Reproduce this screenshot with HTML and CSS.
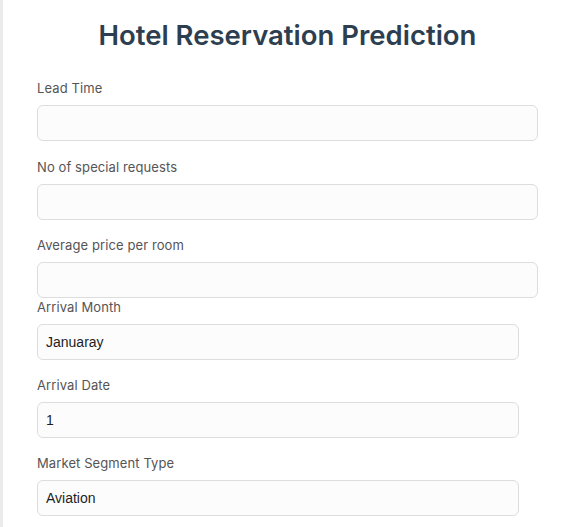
FILE: index.html
```html
<!DOCTYPE html>
<html lang="en">
<head>
<meta charset="utf-8">
<title>Hotel Reservation Prediction</title>
<link rel="stylesheet" href="styles.css">
</head>
<body>
<div class="page">
  <form class="form">
    <h1 class="title">Hotel Reservation Prediction</h1>

    <div class="group">
      <label class="label" for="lead">Lead Time</label>
      <input class="field" id="lead" type="text">
    </div>

    <div class="group group-tight">
      <label class="label" for="req">No of special requests</label>
      <input class="field" id="req" type="text">
    </div>

    <div class="group group-last">
      <label class="label" for="price">Average price per room</label>
      <input class="field" id="price" type="text">
    </div>

    <label class="label" for="month">Arrival Month</label>
    <select class="choice" id="month">
      <option>Januaray</option>
    </select>

    <label class="label" for="date">Arrival Date</label>
    <select class="choice" id="date">
      <option>1</option>
    </select>

    <label class="label" for="segment">Market Segment Type</label>
    <select class="choice" id="segment">
      <option>Aviation</option>
    </select>
  </form>
</div>
</body>
</html>
```

FILE: styles.css
```css
html, body {
  margin: 0;
  padding: 0;
  background: #ffffff;
}

.page {
  min-height: 527px;
  border-left: 3px solid #ebebeb;
  padding: 0 32px 0 34px;
  box-sizing: border-box;
}

.form {
  width: 501px;
  display: flex;
  flex-direction: column;
  align-items: flex-start;
}

.title {
  align-self: stretch;
  margin: 17px 0 26px;
  font-family: "Inter", "Noto Sans", sans-serif;
  font-weight: 600;
  font-size: 27.5px;
  line-height: 36px;
  color: #2c3e50;
  text-align: center;
}

.group {
  align-self: stretch;
  display: flex;
  flex-direction: column;
  margin-bottom: 17px;
}

.group-tight {
  margin-bottom: 16px;
}

.group-last {
  margin-bottom: 0;
}

.label {
  display: block;
  font-family: "Inter", "Noto Sans", sans-serif;
  font-size: 13px;
  letter-spacing: 0.1px;
  line-height: 19px;
  color: #555555;
  margin-bottom: 7px;
}

.field {
  box-sizing: border-box;
  width: 100%;
  height: 36px;
  margin: 0;
  border: 1px solid #dddddd;
  border-radius: 6px;
  background: #fcfcfc;
  padding: 0 8px;
  font-family: "Liberation Sans", Arial, sans-serif;
  font-size: 14px;
}

.choice {
  -webkit-appearance: none;
  appearance: none;
  box-sizing: border-box;
  width: 482px;
  height: 36px;
  margin: 0 0 16px;
  border: 1px solid #dddddd;
  border-radius: 6px;
  background: #fcfcfc;
  padding: 0 8px;
  font-family: "Liberation Sans", Arial, sans-serif;
  font-size: 14px;
  color: #1e1e1e;
}
```
